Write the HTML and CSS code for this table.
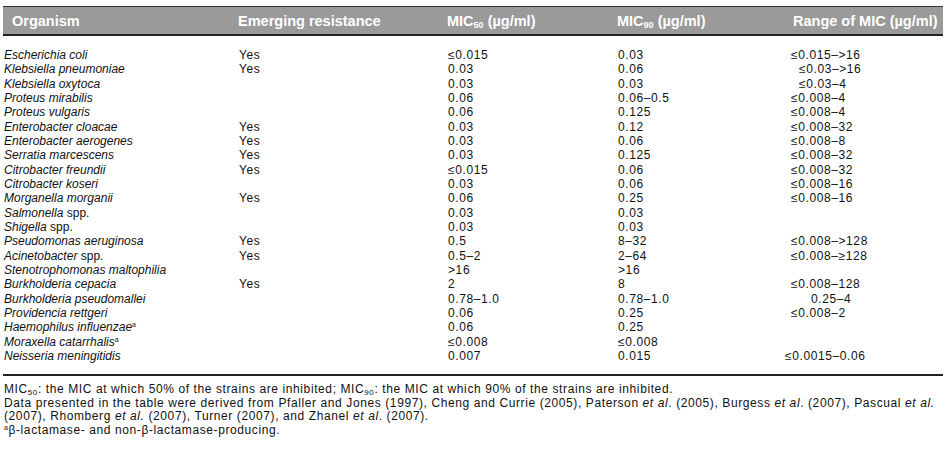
FILE: index.html
```html
<!DOCTYPE html>
<html>
<head>
<meta charset="utf-8">
<link rel="stylesheet" href="styles.css">
</head>
<body>
<div class="page">
<table class="mic">
  <colgroup>
    <col class="c1"><col class="c2"><col class="c3"><col class="c4"><col class="c5">
  </colgroup>
  <thead>
    <tr>
      <th class="first">Organism</th>
      <th>Emerging resistance</th>
      <th>MIC<sub>50</sub> (µg/ml)</th>
      <th>MIC<sub>90</sub> (µg/ml)</th>
      <th class="hrange">Range of MIC (µg/ml)</th>
    </tr>
  </thead>
  <tbody>
    <tr class="top"><td><i>Escherichia coli</i></td><td>Yes</td><td>≤0.015</td><td>0.03</td><td class="r">≤0.015–&gt;16</td></tr>
    <tr><td><i>Klebsiella pneumoniae</i></td><td>Yes</td><td>0.03</td><td>0.06</td><td class="r in8">≤0.03–&gt;16</td></tr>
    <tr><td><i>Klebsiella oxytoca</i></td><td></td><td>0.03</td><td>0.03</td><td class="r in8">≤0.03–4</td></tr>
    <tr><td><i>Proteus mirabilis</i></td><td></td><td>0.06</td><td>0.06–0.5</td><td class="r">≤0.008–4</td></tr>
    <tr><td><i>Proteus vulgaris</i></td><td></td><td>0.06</td><td>0.125</td><td class="r">≤0.008–4</td></tr>
    <tr><td><i>Enterobacter cloacae</i></td><td>Yes</td><td>0.03</td><td>0.12</td><td class="r">≤0.008–32</td></tr>
    <tr><td><i>Enterobacter aerogenes</i></td><td>Yes</td><td>0.03</td><td>0.06</td><td class="r">≤0.008–8</td></tr>
    <tr><td><i>Serratia marcescens</i></td><td>Yes</td><td>0.03</td><td>0.125</td><td class="r">≤0.008–32</td></tr>
    <tr><td><i>Citrobacter freundii</i></td><td>Yes</td><td>≤0.015</td><td>0.06</td><td class="r">≤0.008–32</td></tr>
    <tr><td><i>Citrobacter koseri</i></td><td></td><td>0.03</td><td>0.06</td><td class="r">≤0.008–16</td></tr>
    <tr><td><i>Morganella morganii</i></td><td>Yes</td><td>0.06</td><td>0.25</td><td class="r">≤0.008–16</td></tr>
    <tr><td><i>Salmonella</i> spp.</td><td></td><td>0.03</td><td>0.03</td><td class="r"></td></tr>
    <tr><td><i>Shigella</i> spp.</td><td></td><td>0.03</td><td>0.03</td><td class="r"></td></tr>
    <tr><td><i>Pseudomonas aeruginosa</i></td><td>Yes</td><td>0.5</td><td>8–32</td><td class="r">≤0.008–&gt;128</td></tr>
    <tr><td><i>Acinetobacter</i> spp.</td><td>Yes</td><td>0.5–2</td><td>2–64</td><td class="r">≤0.008–≥128</td></tr>
    <tr><td><i>Stenotrophomonas maltophilia</i></td><td></td><td>&gt;16</td><td>&gt;16</td><td class="r"></td></tr>
    <tr><td><i>Burkholderia cepacia</i></td><td>Yes</td><td>2</td><td>8</td><td class="r">≤0.008–128</td></tr>
    <tr><td><i>Burkholderia pseudomallei</i></td><td></td><td>0.78–1.0</td><td>0.78–1.0</td><td class="r in20">0.25–4</td></tr>
    <tr><td><i>Providencia rettgeri</i></td><td></td><td>0.06</td><td>0.25</td><td class="r">≤0.008–2</td></tr>
    <tr><td><i>Haemophilus influenzae</i><sup>a</sup></td><td></td><td>0.06</td><td>0.25</td><td class="r"></td></tr>
    <tr><td><i>Moraxella catarrhalis</i><sup>a</sup></td><td></td><td>≤0.008</td><td>≤0.008</td><td class="r"></td></tr>
    <tr class="last"><td><i>Neisseria meningitidis</i></td><td></td><td>0.007</td><td>0.015</td><td class="r out6">≤0.0015–0.06</td></tr>
  </tbody>
</table>
<div class="notes">
  <p>MIC<sub>50</sub>: the MIC at which 50% of the strains are inhibited; MIC<sub>90</sub>: the MIC at which 90% of the strains are inhibited.</p>
  <p>Data presented in the table were derived from Pfaller and Jones (1997), Cheng and Currie (2005), Paterson <i>et al</i>. (2005), Burgess <i>et al</i>. (2007), Pascual <i>et al.</i><br>(2007), Rhomberg <i>et al.</i> (2007), Turner (2007), and Zhanel <i>et al</i>. (2007).</p>
  <p><sup>a</sup>β-lactamase- and non-β-lactamase-producing.</p>
</div>
</div>
</body>
</html>
```
FILE: styles.css
```css
html, body {
  margin: 0;
  padding: 0;
  background: #fff;
}
body {
  font-family: "Liberation Sans", Arial, sans-serif;
  color: #111;
}
.page {
  width: 940px;
  padding: 6px 0 0 3px;
}
.mic {
  width: 940px;
  border-collapse: collapse;
  table-layout: fixed;
  font-size: 12px;
}
.c1 { width: 235px; }
.c2 { width: 209px; }
.c3 { width: 170px; }
.c4 { width: 173px; }
.c5 { width: 153px; }
.mic thead th {
  background: #9a9a9a;
  color: #fff;
  font-weight: 700;
  font-size: 14.5px;
  text-align: left;
  height: 27px;
  padding: 0;
  border-top: 1px solid #333;
  border-bottom: 2px solid #222;
  white-space: nowrap;
}
.mic thead th.first { padding-left: 9px; }
.mic thead th.hrange { padding-left: 3px; }
.mic thead sub {
  font-size: 9px;
  vertical-align: -2px;
  line-height: 0;
}
.mic td {
  padding: 0 0 0 1px;
  height: 14.33px;
  line-height: 14px;
  white-space: nowrap;
  vertical-align: middle;
}
.mic td + td {
  letter-spacing: 0.6px;
}
.mic tr.top td { padding-top: 12px; }
.mic tr.last td {
  padding-bottom: 11px;
  border-bottom: 2px solid #222;
}
.mic td sup {
  font-size: 7px;
  vertical-align: 4px;
  line-height: 0;
}
.r.in8 { padding-left: 9px; }
.r.in20 { padding-left: 21px; }
.r.out6 { text-indent: -6px; }
.notes {
  font-size: 12px;
  line-height: 13.5px;
  letter-spacing: 0.6px;
  padding: 7px 0 0 1px;
}
.notes p { margin: 0; }
.notes sub {
  font-size: 8px;
  vertical-align: -2px;
  line-height: 0;
}
.notes sup {
  font-size: 7px;
  vertical-align: 4px;
  line-height: 0;
}
```
